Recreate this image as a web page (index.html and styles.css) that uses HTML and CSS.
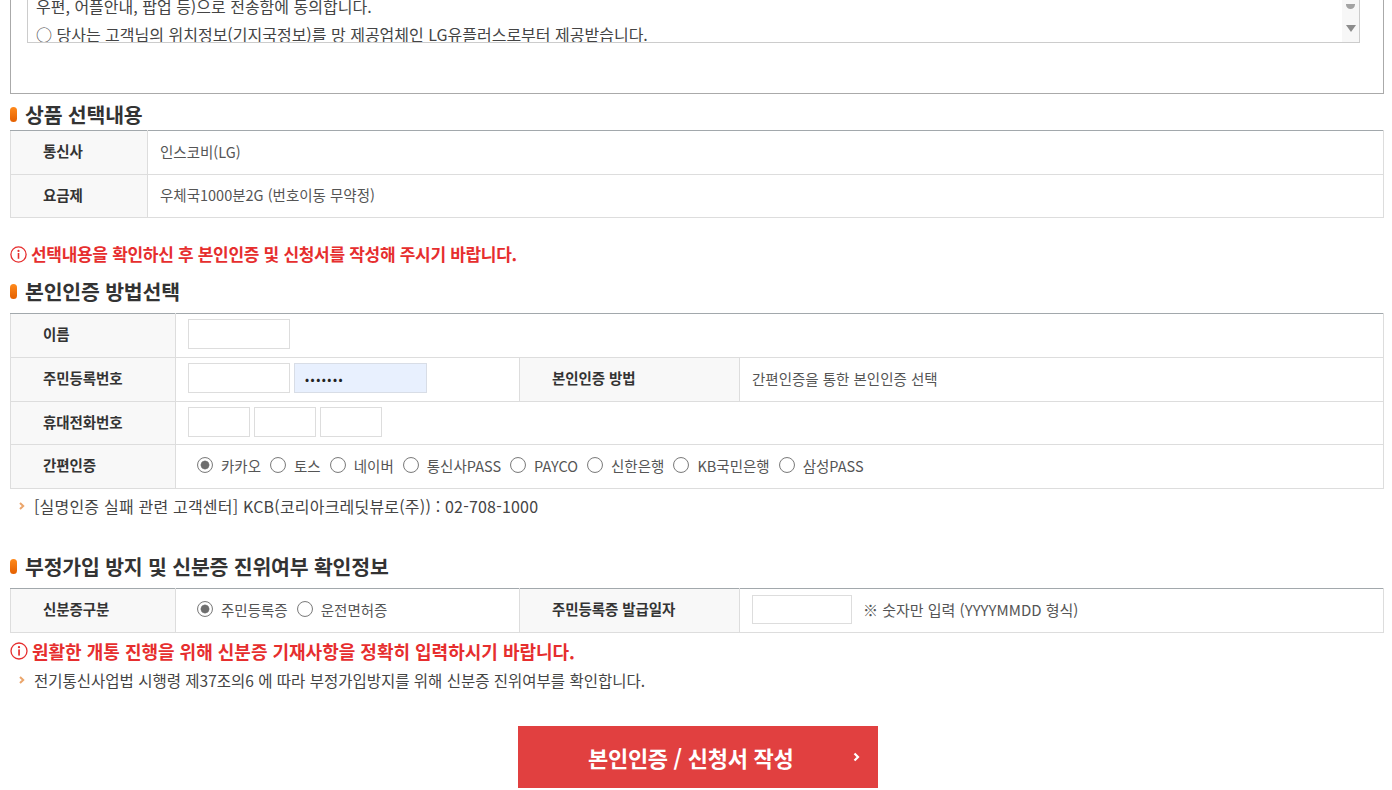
FILE: index.html
```html
<!DOCTYPE html>
<html lang="ko">
<head>
<meta charset="utf-8">
<title>본인인증 / 신청서 작성</title>
<link rel="stylesheet" href="styles.css">
</head>
<body>
<div class="page">
  <div class="agree-box">
    <div class="agree-scroll">
      <div class="agree-text">
        <p>우편, 어플안내, 팝업 등)으로 전송함에 동의합니다.</p>
        <p>○ 당사는 고객님의 위치정보(기지국정보)를 망 제공업체인 LG유플러스로부터 제공받습니다.</p>
      </div>
      <div class="fake-scrollbar">
        <span class="sb-thumb"></span>
        <svg class="sb-arrow" width="10" height="7" viewBox="0 0 10 7"><polygon points="0,0 10,0 5,7" fill="#8c8c8c"/></svg>
      </div>
    </div>
  </div>

  <h3 class="sec-title st-product"><span class="bullet"></span>상품 선택내용</h3>
  <table class="info-table">
    <colgroup><col class="c-lab1"><col></colgroup>
    <tr><th>통신사</th><td>인스코비(LG)</td></tr>
    <tr class="h43"><th>요금제</th><td>우체국1000분2G (번호이동 무약정)</td></tr>
  </table>

  <p class="warn warn-1"><svg class="warn-ico" width="17" height="17" viewBox="0 0 17 17"><circle cx="8.5" cy="8.5" r="7.6" fill="none" stroke="#e62e2e" stroke-width="1.3"/><circle cx="8.5" cy="4.9" r="1.1" fill="#e62e2e"/><rect x="7.7" y="7" width="1.6" height="5.8" fill="#e62e2e"/></svg>선택내용을 확인하신 후 본인인증 및 신청서를 작성해 주시기 바랍니다.</p>

  <h3 class="sec-title st-auth"><span class="bullet"></span>본인인증 방법선택</h3>
  <table class="info-table">
    <colgroup><col class="c-lab"><col class="c-val"><col class="c-lab2"><col></colgroup>
    <tr>
      <th>이름</th>
      <td colspan="3"><input class="inp w102" type="text"></td>
    </tr>
    <tr>
      <th>주민등록번호</th>
      <td><div class="inp-row"><input class="inp w102" type="text"><input class="inp w133 autofill" type="text" value="•••••••"></div></td>
      <th>본인인증 방법</th>
      <td>간편인증을 통한 본인인증 선택</td>
    </tr>
    <tr class="h43">
      <th>휴대전화번호</th>
      <td colspan="3"><div class="inp-row"><input class="inp w62" type="text"><input class="inp w62" type="text"><input class="inp w62" type="text"></div></td>
    </tr>
    <tr>
      <th>간편인증</th>
      <td colspan="3">
        <div class="radios">
          <span class="radio on"></span><span class="rlab">카카오</span>
          <span class="radio"></span><span class="rlab">토스</span>
          <span class="radio"></span><span class="rlab">네이버</span>
          <span class="radio"></span><span class="rlab">통신사PASS</span>
          <span class="radio"></span><span class="rlab">PAYCO</span>
          <span class="radio"></span><span class="rlab">신한은행</span>
          <span class="radio"></span><span class="rlab">KB국민은행</span>
          <span class="radio"></span><span class="rlab">삼성PASS</span>
        </div>
      </td>
    </tr>
  </table>

  <p class="note note-1"><svg class="note-ico" width="6" height="8" viewBox="0 0 6 8"><polyline points="1,1 4.2,4 1,7" fill="none" stroke="#eba56b" stroke-width="2"/></svg>[실명인증 실패 관련 고객센터] KCB(코리아크레딧뷰로(주)) : 02-708-1000</p>

  <h3 class="sec-title st-id"><span class="bullet"></span>부정가입 방지 및 신분증 진위여부 확인정보</h3>
  <table class="info-table">
    <colgroup><col class="c-lab"><col class="c-val"><col class="c-lab2"><col></colgroup>
    <tr>
      <th>신분증구분</th>
      <td>
        <div class="radios">
          <span class="radio on"></span><span class="rlab">주민등록증</span>
          <span class="radio"></span><span class="rlab">운전면허증</span>
        </div>
      </td>
      <th>주민등록증 발급일자</th>
      <td><div class="inp-row"><input class="inp w100" type="text"><span class="hint">※ 숫자만 입력 (YYYYMMDD 형식)</span></div></td>
    </tr>
  </table>

  <p class="warn warn-2"><svg class="warn-ico" width="18" height="18" viewBox="0 0 18 18"><circle cx="9" cy="9" r="8" fill="none" stroke="#e62e2e" stroke-width="1.3"/><circle cx="9" cy="5.2" r="1.15" fill="#e62e2e"/><rect x="8.2" y="7.4" width="1.7" height="6.2" fill="#e62e2e"/></svg>원활한 개통 진행을 위해 신분증 기재사항을 정확히 입력하시기 바랍니다.</p>

  <p class="note note-2"><svg class="note-ico" width="6" height="8" viewBox="0 0 6 8"><polyline points="1,1 4.2,4 1,7" fill="none" stroke="#eba56b" stroke-width="2"/></svg>전기통신사업법 시행령 제37조의6 에 따라 부정가입방지를 위해 신분증 진위여부를 확인합니다.</p>

  <div class="btn-wrap">
    <a class="btn-submit" href="#"><span class="btn-text">본인인증 / 신청서 작성</span><svg class="btn-chev" width="7" height="10" viewBox="0 0 7 10"><polyline points="1.5,1.5 5,5 1.5,8.5" fill="none" stroke="#fff" stroke-width="2.2"/></svg></a>
  </div>
</div>
</body>
</html>
```

FILE: styles.css
```css
* { box-sizing: border-box; }
html, body { margin: 0; padding: 0; background: #fff; }
body {
  font-family: "Noto Sans CJK KR", "Noto Sans", sans-serif;
  color: #444;
  overflow: hidden;
}
.page {
  width: 1384px;
  padding-left: 10px;
}

/* agreement box */
.agree-box {
  margin-top: -60px;
  height: 154px;
  border: 1px solid #aaa;
  padding: 9px 23px 0 16px;
}
.agree-scroll {
  height: 93px;
  border: 1px solid #ccc;
  display: flex;
  overflow: hidden;
}
.agree-text {
  flex: 1;
  display: flex;
  flex-direction: column;
  justify-content: flex-end;
  padding-left: 8px;
  font-size: 16px;
  line-height: 28px;
  color: #444;
  overflow: hidden;
}
.agree-text p { margin: 0; white-space: nowrap; }
.agree-text p:last-child { margin-bottom: -6px; }
.fake-scrollbar {
  width: 17px;
  background: #f7f7f7;
  display: flex;
  flex-direction: column;
  align-items: center;
}
.sb-thumb {
  width: 9px;
  height: 5px;
  margin-top: 53px;
  background: #a3a3a3;
  border-radius: 0 0 5px 5px;
}
.sb-arrow { margin-top: 16px; }

/* section titles */
.sec-title {
  display: flex;
  align-items: center;
  margin: 0;
  font-size: 20.5px;
  line-height: 24px;
  font-weight: 700;
  color: #333;
  letter-spacing: -0.2px;
}
.bullet {
  width: 7px;
  height: 15px;
  border-radius: 4px;
  background: linear-gradient(#ff8a1c, #e45f00);
  margin-right: 8px;
}
.st-product { margin: 8px 0 4px; }
.st-auth { margin: 13px 0 10px; }
.st-id { margin: 37px 0 10px; }

/* tables */
.info-table {
  width: 1374px;
  border-collapse: collapse;
  table-layout: fixed;
}
.c-lab1 { width: 137px; }
.c-lab { width: 165px; }
.c-val { width: 344px; }
.c-lab2 { width: 220px; }
.info-table tr { height: 44px; }
.info-table tr.h43 { height: 43px; }
.info-table th,
.info-table td {
  border: 1px solid #ddd;
  padding: 0 0 3px;
  vertical-align: middle;
  text-align: left;
}
.info-table tr:first-child th,
.info-table tr:first-child td { border-top-color: #a2a8ac; }
.info-table th {
  background: #f8f8f8;
  padding-left: 32px;
  padding-bottom: 4px;
  font-size: 14.5px;
  font-weight: 700;
  color: #333;
  letter-spacing: -0.1px;
}
.info-table td {
  padding-left: 12px;
  font-size: 14.5px;
  color: #555;
  letter-spacing: 0;
}
.inp-row { display: flex; align-items: center; gap: 4px; }
.inp {
  display: block;
  height: 30px;
  border: 1px solid #ddd;
  background: #fff;
  padding: 0 10px;
  font-family: inherit;
  font-size: 12px;
  color: #222;
  outline: none;
}
.w102 { width: 102px; }
.w133 { width: 133px; }
.w62 { width: 62px; }
.w100 { width: 100px; height: 29px; }
.autofill { background: #e8f0fe; border-color: #d8dde6; letter-spacing: 1.5px; }
.hint { margin-left: 7px; color: #555; font-size: 15px; letter-spacing: 0; }

/* radios */
.radios { display: flex; align-items: center; padding-left: 9px; }
.radio {
  width: 16px;
  height: 16px;
  border: 1px solid #7e7e7e;
  border-radius: 50%;
  background: radial-gradient(circle, #fff 0 6px, #f2f2f2 7px);
  margin-right: 8px;
  flex: none;
}
.radio.on {
  background: radial-gradient(circle, #6e6e6e 0 3.6px, #9a9a9a 4.2px, #fff 4.8px, #fff 6px, #eee 7px);
}
.rlab { margin-right: 9px; white-space: nowrap; color: #555; }

/* warnings and notes */
.warn {
  display: flex;
  align-items: center;
  margin: 0;
  line-height: 24px;
  color: #e62e2e;
  font-weight: 700;
  white-space: nowrap;
}
.warn-ico { flex: none; margin-right: 4px; }
.warn-1 { margin-top: 24px; font-size: 17px; letter-spacing: -0.3px; }
.warn-2 { margin-top: 6px; font-size: 18px; letter-spacing: 0; }
.note {
  display: flex;
  align-items: center;
  margin: 0;
  padding-left: 9px;
  line-height: 22px;
  font-size: 15.5px;
  color: #444;
  white-space: nowrap;
}
.note-ico { flex: none; margin-right: 9px; }
.note-1 { margin-top: 6px; font-size: 16px; letter-spacing: 0.2px; }
.note-2 { margin-top: 6px; }

/* button */
.btn-wrap {
  display: flex;
  justify-content: flex-start;
  padding-left: 508px;
  margin-top: 35px;
}
.btn-submit {
  width: 360px;
  height: 62px;
  background: #e14040;
  color: #fff;
  text-decoration: none;
  display: flex;
  align-items: center;
  padding-left: 70px;
  font-size: 22px;
  font-weight: 700;
  letter-spacing: -0.3px;
}
.btn-text { width: 265px; }
.btn-chev { margin-left: 0; }
```
